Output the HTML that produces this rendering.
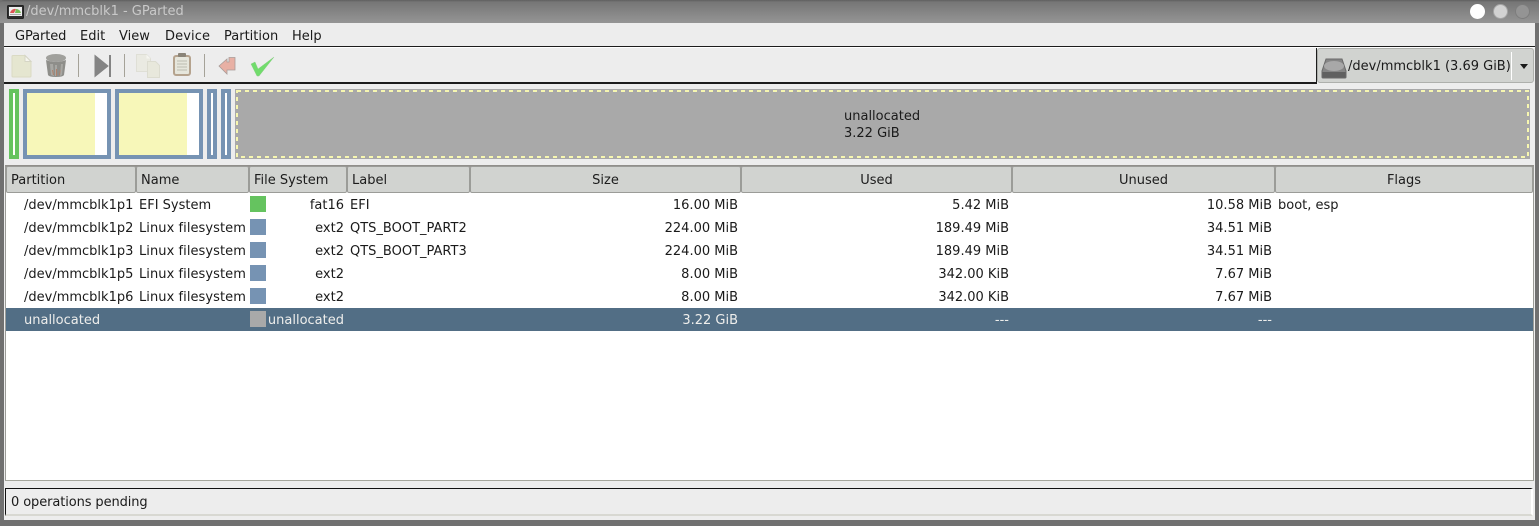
<!DOCTYPE html>
<html><head><meta charset="utf-8"><style>
html,body{margin:0;padding:0;width:1539px;height:526px;overflow:hidden;background:#707070}
*{box-sizing:border-box}
body{position:relative;font:13px/16px "DejaVu Sans",sans-serif;color:#1a1a1a}
.a{position:absolute}
.t{position:absolute;white-space:nowrap;line-height:16px}
.r{text-align:right}
.h{position:absolute;top:166px;height:27px;background:#d1d3d0;border:1px solid #9b9c98;border-radius:2px;line-height:25px;padding-top:1px;padding-left:4px;white-space:nowrap;color:#1c1c1c}
.h.c{text-align:center;padding-left:0}
.sw{position:absolute;left:250px;width:16px;height:16px;background:#7693b3}
</style></head><body>
<div class="a" style="left:0;top:0;width:1539px;height:23px;background:linear-gradient(#5f5f5f,#767676 2px,#959595);border-radius:4px 4px 0 0"></div>
<svg class="a" style="left:7px;top:5px" width="17" height="14" viewBox="0 0 17 14"><rect x=".5" y=".5" width="16" height="13" rx="1" fill="#2e2e2e" stroke="#222"/><rect x="2" y="2" width="13" height="9" fill="#eee"/><path d="M3 8a5 5 0 0 1 6-4l-2 4z" fill="#d55"/><path d="M9 4a5 5 0 0 1 5 4H8z" fill="#7b5"/><rect x="3" y="9" width="11" height="1" fill="#aaa"/></svg>
<div class="t" style="left:26px;top:4px;color:#c9c9c9;font-size:13px">/dev/mmcblk1 - GParted</div>
<div class="a" style="left:1470px;top:4px;width:15px;height:15px;border-radius:50%;background:#fff"></div>
<div class="a" style="left:1493px;top:4px;width:15px;height:15px;border-radius:50%;background:#d2d2d2;border:1px solid #a5a5a5"></div>
<div class="a" style="left:1515px;top:4px;width:15px;height:15px;border-radius:50%;background:#949494;border:1px solid #7d7d7d"></div>

<div class="a" style="left:4px;top:23px;width:1531px;height:497px;background:#ededed"></div>
<div class="t" style="left:15px;top:27px;letter-spacing:-.1px;margin-top:2px">GParted</div>
<div class="t" style="left:80px;top:29px">Edit</div>
<div class="t" style="left:119px;top:29px">View</div>
<div class="t" style="left:165px;top:29px;letter-spacing:.1px">Device</div>
<div class="t" style="left:224px;top:29px">Partition</div>
<div class="t" style="left:292px;top:29px">Help</div>
<div class="a" style="left:4px;top:46px;width:1531px;height:1px;background:#1c1c1c"></div>
<div class="a" style="left:4px;top:47px;width:1531px;height:1px;background:#fff"></div>
<div class="a" style="left:4px;top:82px;width:1312px;height:2px;background:#1c1c1c"></div>
<div class="a" style="left:1316px;top:48px;width:1px;height:36px;background:#1c1c1c"></div>

<svg class="a" style="left:0;top:48px" width="300" height="36" viewBox="0 0 300 36">
<path d="M13 7.500h12l6 6V28a1 1 0 0 1-1 1H13a1 1 0 0 1-1-1V8.500a1 1 0 0 1 1-1z" fill="#e5e6d0" stroke="#dadac4"/><path d="M25 7.500v6h6z" fill="#f5f5ee" stroke="#d5d5c5"/>
<ellipse cx="56" cy="10" rx="10" ry="4" fill="#a0a09c"/><path d="M46 12l2 15q1 2 8 2t8-2l2-15q-10 4-20 0z" fill="#8e8e8a"/><path d="M50 16l1 11 3 1-1-12zM55 17v11h2V17zM61 16l-1 12 2-1 1-11z" fill="#a8a8a4"/><path d="M52 22l1 5h1l-1-5zM56 21v7h1v-7zM60 22l-1 5h1l.5-5z" fill="#b0806a"/>
<rect x="78" y="6" width="1" height="23" fill="#a5a298"/>
<path d="M95 7.500l13 10.500-13 10.500z" fill="#848484" stroke="#848484"/><rect x="109" y="7" width="2" height="22" fill="#848484"/>
<rect x="124" y="6" width="1" height="23" fill="#a5a298"/>
<path d="M136.500 6.500h10l4 4v13h-14z" fill="#eaeae2" stroke="#dfdfd6"/><path d="M146.500 6.500v4h4z" fill="#f5f5f0"/><path d="M147.500 13.500h8l4 4v12h-12z" fill="#e8e8dc" stroke="#dcdcd0"/>
<rect x="174" y="8" width="16" height="19" rx="2" fill="#e6e6dc" stroke="#b5a38e" stroke-width="2"/><rect x="178" y="5" width="8" height="4" rx="1" fill="#8a8478"/><path d="M177 13h10M177 16h10M177 19h10M177 22h10" stroke="#bcbcb0"/>
<rect x="204" y="6" width="1" height="23" fill="#a5a298"/>
<path d="M219 18l8-7v3h2V9.500h6V22h-8v4z" fill="#e8b0a4" stroke="#a89c98" stroke-width=".8"/>
<path d="M251 16l4-2 3 7 16-12-15 19h-2z" fill="#71dc6c" stroke="#8ccf86" stroke-width=".5"/>
</svg>

<div class="a" style="left:1317px;top:48px;width:217px;height:35px;background:#d1d3d0;border:1px solid #aeb0ac;border-radius:3px"></div>
<div class="a" style="left:1511px;top:52px;width:1px;height:28px;background:#fff"></div>
<svg class="a" style="left:1321px;top:58px" width="26" height="21" viewBox="0 0 26 21"><path d="M5 1h16l4 12v6a1 1 0 0 1-1 1H2a1 1 0 0 1-1-1v-6z" fill="#858585" stroke="#6a6a6a"/><ellipse cx="13" cy="8" rx="10" ry="5" fill="#a8a8a8"/><rect x="1.500" y="14" width="23" height="5.500" fill="#606060"/></svg>
<div class="t" style="left:1348px;top:57px;margin-top:2px">/dev/mmcblk1 (3.69 GiB)</div>
<div class="a" style="left:1520px;top:64px;border:4px solid transparent;border-top:5px solid #1a1a1a"></div>

<div class="a" style="left:9px;top:89px;width:10px;height:70px;background:#fff;border:4px solid #65c35f"></div>
<div class="a" style="left:23px;top:89px;width:88px;height:70px;background:#fff;border:4px solid #7693b3"><div style="width:68px;height:100%;background:#f7f7b9"></div></div>
<div class="a" style="left:115px;top:89px;width:88px;height:70px;background:#fff;border:4px solid #7693b3"><div style="width:68px;height:100%;background:#f7f7b9"></div></div>
<div class="a" style="left:207px;top:89px;width:10px;height:70px;background:#fff;border:4px solid #7693b3"></div>
<div class="a" style="left:221px;top:89px;width:10px;height:70px;background:#fff;border:4px solid #7693b3"></div>
<svg class="a" style="left:235px;top:89px" width="1295" height="70" viewBox="0 0 1295 70"><rect width="1295" height="70" fill="#a9a9a9"/><rect x="2" y="2" width="1291" height="66" fill="none" stroke="#f7f7b0" stroke-width="2" stroke-dasharray="4 4"/></svg>
<div class="t" style="left:844px;top:109px">unallocated</div>
<div class="t" style="left:844px;top:126px">3.22 GiB</div>

<div class="a" style="left:5px;top:165px;width:1529px;height:316px;background:#fff;border:1px solid #9b9c98;border-top:2px solid #918f8b;border-bottom-color:#a5a69c"></div>
<div class="h" style="left:6px;width:130px">Partition</div>
<div class="h" style="left:136px;width:113px">Name</div>
<div class="h" style="left:249px;width:98px">File System</div>
<div class="h" style="left:347px;width:123px">Label</div>
<div class="h c" style="left:470px;width:271px">Size</div>
<div class="h c" style="left:741px;width:271px">Used</div>
<div class="h c" style="left:1012px;width:263px">Unused</div>
<div class="h c" style="left:1275px;width:258px">Flags</div>

<div class="a" style="left:6px;top:308px;width:1527px;height:23px;background:#526e85"></div>

<div class="t" style="left:24px;top:198px">/dev/mmcblk1p1</div><div class="t" style="left:139px;top:198px">EFI System</div><div class="sw" style="top:196px;background:#65c35f"></div><div class="t r" style="left:270px;width:74px;top:198px">fat16</div><div class="t" style="left:350px;top:198px">EFI</div><div class="t r" style="left:538px;width:200px;top:198px">16.00 MiB</div><div class="t r" style="left:809px;width:200px;top:198px">5.42 MiB</div><div class="t r" style="left:1072px;width:200px;top:198px">10.58 MiB</div><div class="t" style="left:1278px;top:198px">boot, esp</div>

<div class="t" style="left:24px;top:221px">/dev/mmcblk1p2</div><div class="t" style="left:139px;top:221px;letter-spacing:.06px">Linux filesystem</div><div class="sw" style="top:219px"></div><div class="t r" style="left:270px;width:74px;top:221px">ext2</div><div class="t" style="left:350px;top:221px">QTS_BOOT_PART2</div><div class="t r" style="left:538px;width:200px;top:221px">224.00 MiB</div><div class="t r" style="left:809px;width:200px;top:221px">189.49 MiB</div><div class="t r" style="left:1072px;width:200px;top:221px">34.51 MiB</div>

<div class="t" style="left:24px;top:244px">/dev/mmcblk1p3</div><div class="t" style="left:139px;top:244px;letter-spacing:.06px">Linux filesystem</div><div class="sw" style="top:242px"></div><div class="t r" style="left:270px;width:74px;top:244px">ext2</div><div class="t" style="left:350px;top:244px">QTS_BOOT_PART3</div><div class="t r" style="left:538px;width:200px;top:244px">224.00 MiB</div><div class="t r" style="left:809px;width:200px;top:244px">189.49 MiB</div><div class="t r" style="left:1072px;width:200px;top:244px">34.51 MiB</div>

<div class="t" style="left:24px;top:267px">/dev/mmcblk1p5</div><div class="t" style="left:139px;top:267px;letter-spacing:.06px">Linux filesystem</div><div class="sw" style="top:265px"></div><div class="t r" style="left:270px;width:74px;top:267px">ext2</div><div class="t r" style="left:538px;width:200px;top:267px">8.00 MiB</div><div class="t r" style="left:809px;width:200px;top:267px">342.00 KiB</div><div class="t r" style="left:1072px;width:200px;top:267px">7.67 MiB</div>

<div class="t" style="left:24px;top:290px">/dev/mmcblk1p6</div><div class="t" style="left:139px;top:290px;letter-spacing:.06px">Linux filesystem</div><div class="sw" style="top:288px"></div><div class="t r" style="left:270px;width:74px;top:290px">ext2</div><div class="t r" style="left:538px;width:200px;top:290px">8.00 MiB</div><div class="t r" style="left:809px;width:200px;top:290px">342.00 KiB</div><div class="t r" style="left:1072px;width:200px;top:290px">7.67 MiB</div>

<div style="color:#eeeeec"><div class="t" style="left:24px;top:313px">unallocated</div><div class="sw" style="top:311px;background:#a9a9a9"></div><div class="t r" style="left:244px;width:100px;top:313px">unallocated</div><div class="t r" style="left:538px;width:200px;top:313px">3.22 GiB</div><div class="t r" style="left:809px;width:200px;top:313px">---</div><div class="t r" style="left:1072px;width:200px;top:313px">---</div></div>

<div class="a" style="left:5px;top:488px;width:1528px;height:28px;background:#ededed;border:2px solid #fff;border-top:1.500px solid #111;border-left:1.500px solid #111;border-bottom-color:#d8d8d2"></div>
<div class="t" style="left:11px;top:494px;margin-top:-1px;padding-top:2px;letter-spacing:-.1px">0 operations pending</div>
</body></html>
